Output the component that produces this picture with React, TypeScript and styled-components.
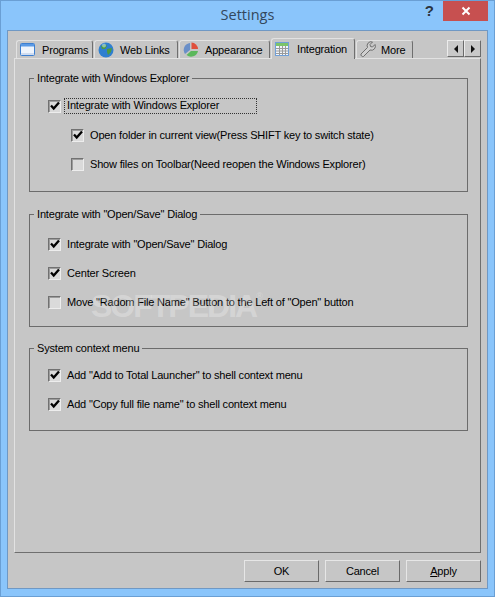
import React from 'react';
import styled, { createGlobalStyle } from 'styled-components';

const GlobalStyle = createGlobalStyle`
  html, body { margin: 0; padding: 0; background: #8ac5fb; }
  * { box-sizing: border-box; }
`;

const Window = styled.div`
  position: relative;
  width: 495px;
  height: 597px;
  background: #8ac5fb;
  border: 1px solid #6a9fd4;
  padding: 0 6px 7px;
  display: flex;
  flex-direction: column;
  font-family: 'Liberation Sans', Arial, sans-serif;
  font-size: 11px;
  letter-spacing: -0.18px;
  color: #000;
  overflow: hidden;
`;

const TitleBar = styled.div`
  position: relative;
  height: 29px;
  flex: none;
  display: flex;
  align-items: center;
  justify-content: center;
`;

const Title = styled.div`
  font-family: 'Open Sans', sans-serif;
  font-size: 14.5px;
  letter-spacing: 0;
  color: #33475c;
  margin-top: -2px;
`;

const HelpMark = styled.div`
  position: absolute;
  right: 54px;
  top: 1px;
  font-size: 15px;
  font-weight: 700;
  letter-spacing: 0;
  color: #2a3540;
`;

const CloseButton = styled.div`
  position: absolute;
  right: 0;
  top: 0;
  width: 45px;
  height: 20px;
  background: #c75050;
  display: flex;
  align-items: center;
  justify-content: center;
`;

const Client = styled.div`
  flex: 1;
  background: #c6c6c6;
  border: 1px solid #6f98c4;
  padding: 7px 6px 0;
  display: flex;
  flex-direction: column;
`;

const TabStrip = styled.div`
  height: 20px;
  flex: none;
  display: flex;
  align-items: flex-end;
  padding-left: 2px;
  position: relative;
  z-index: 1;
`;

const Tab = styled.div<{ $w: number; $active?: boolean }>`
  width: ${p => p.$w}px;
  height: ${p => (p.$active ? 21 : 18)}px;
  margin-right: 1px;
  margin-bottom: ${p => (p.$active ? -1 : 0)}px;
  background: #c6c6c6;
  border: 1px solid #e2e2e2;
  border-right-color: #6f6f6f;
  border-bottom: 0;
  border-radius: 3px 3px 0 0;
  display: flex;
  align-items: center;
  padding-left: 3px;
`;

const TabLabel = styled.span<{ $gap: number }>`
  margin-left: ${p => p.$gap}px;
  white-space: nowrap;
`;

const ScrollButtons = styled.div`
  margin-left: auto;
  margin-bottom: 1px;
  display: flex;
`;

const ScrollButton = styled.div`
  width: 17px;
  height: 17px;
  background: #c9c9c9;
  border: 1px solid;
  border-color: #ececec #6a6a6a #6a6a6a #ececec;
  display: flex;
  align-items: center;
  justify-content: center;
`;

const Panel = styled.div`
  height: 495px;
  flex: none;
  border: 1px solid;
  border-color: #e2e2e2 #6f6f6f #6f6f6f #e2e2e2;
  padding: 12px 12px 0 14px;
  display: flex;
  flex-direction: column;
`;

const Group = styled.fieldset<{ $h: number; $top?: number }>`
  height: ${p => p.$h}px;
  margin: ${p => p.$top ?? 0}px 0 0;
  border: 1px solid #6c6c6c;
  padding: 0 0 0 18px;
  min-width: 0;
  display: flex;
  flex-direction: column;
`;

const Legend = styled.legend`
  padding: 0 3px;
  line-height: 14px;
  height: 14px;
  margin-left: -14px;
  white-space: nowrap;
`;

const Row = styled.div<{ $indent?: boolean; $top: number }>`
  display: flex;
  align-items: center;
  height: 16px;
  margin-top: ${p => p.$top}px;
  margin-left: ${p => (p.$indent ? 23 : 0)}px;
`;

const Box = styled.span`
  width: 13px;
  height: 13px;
  flex: none;
  background: #dadada;
  border: 1px solid;
  border-color: #717171 #ededed #ededed #717171;
  box-shadow: inset 1px 1px 0 #9c9c9c;
  display: flex;
  align-items: center;
  justify-content: center;
  margin-right: 6px;
`;

const RowLabel = styled.span`
  white-space: nowrap;
`;

const FocusLabel = styled(RowLabel)`
  width: 193px;
  height: 16px;
  line-height: 15px;
  margin-left: -3px;
  padding-left: 3px;
  outline: 1px dotted #333;
  outline-offset: -1px;
`;

const Footer = styled.div`
  flex: 1;
  display: flex;
  justify-content: flex-end;
  gap: 6px;
  padding-top: 7px;
`;

const DialogButton = styled.div`
  width: 75px;
  height: 22px;
  background: #c6c6c6;
  border: 1px solid;
  border-color: #e6e6e6 #6a6a6a #6a6a6a #e6e6e6;
  display: flex;
  align-items: center;
  justify-content: center;
`;

const Watermark = styled.div`
  position: absolute;
  left: 90px;
  top: 287px;
  font-size: 32px;
  font-weight: 700;
  letter-spacing: -2px;
  color: rgba(255, 255, 255, 0.27);
  pointer-events: none;
`;

const WatermarkMark = styled.sup`
  font-size: 9px;
  font-weight: 400;
  letter-spacing: 0;
  vertical-align: 18px;
  line-height: 0;
`;

const Check = () => (
  <svg width="10" height="10" viewBox="0 0 10 10">
    <path d="M1 4.6 L3.7 7.6 L9 1.4" fill="none" stroke="#000" strokeWidth="2.3" />
  </svg>
);

const Option = ({ label, checked, top, indent, focus }: { label: string; checked?: boolean; top: number; indent?: boolean; focus?: boolean }) => (
  <Row $top={top} $indent={indent}>
    <Box>{checked && <Check />}</Box>
    {focus ? <FocusLabel>{label}</FocusLabel> : <RowLabel>{label}</RowLabel>}
  </Row>
);

const WindowIcon = () => (
  <svg width="15" height="13" viewBox="0 0 15 13">
    <rect x="0.5" y="0.5" width="14" height="12" rx="1" fill="#eef4fc" stroke="#3d7fd0" />
    <rect x="1" y="1" width="13" height="2.5" fill="#5a9ae6" />
    <rect x="1" y="10" width="13" height="2" fill="#cfdcf0" />
  </svg>
);

const GlobeIcon = () => (
  <svg width="16" height="16" viewBox="0 0 16 16">
    <circle cx="8" cy="8" r="7.5" fill="#2f7fd0" />
    <path d="M3 4 L7 2 L9 4 L7 7 L4 7 Z M9 7 L14 6 L13 10 L10 13 L9 10 Z" fill="#4f9a3f" />
    <circle cx="6" cy="3.5" r="2" fill="#bcdcf5" opacity="0.6" />
  </svg>
);

const PieIcon = () => (
  <svg width="16" height="16" viewBox="0 0 16 16">
    <path d="M7 1 L7 8 L2 12 A7 7 0 0 1 7 1 Z" fill="#6a8fc8" />
    <path d="M8.5 0.5 A7 7 0 0 1 15 7 L8.5 7 Z" fill="#e0503c" />
    <path d="M8 9 L15 9 A7 7 0 0 1 3.5 13 Z" fill="#5cb85c" />
  </svg>
);

const GridIcon = () => (
  <svg width="14" height="14" viewBox="0 0 14 14">
    <rect x="0.5" y="0.5" width="13" height="13" fill="#f2f6fb" stroke="#6f9fd8" />
    <rect x="1" y="1" width="12" height="3" fill="#7cc46a" />
    <path d="M1 6.5H13M1 9H13M1 11.5H13M4.5 4V13M7.5 4V13M10.5 4V13" stroke="#9a9a9a" strokeWidth="1" />
  </svg>
);

const WrenchIcon = () => (
  <svg width="16" height="17" viewBox="0 0 16 17">
    <path d="M15 3.5 L12.5 6 L10.5 5.5 L10 3.5 L12.5 1 A4 4 0 0 0 7.5 6.5 L1 13 A2 2 0 0 0 3.5 15.5 L10 9 A4 4 0 0 0 15 3.5 Z" fill="#d0d0d0" stroke="#6e6e6e" />
  </svg>
);

const App: React.FC = () => (
  <>
    <GlobalStyle />
    <Window>
      <TitleBar>
        <Title>Settings</Title>
        <HelpMark>?</HelpMark>
        <CloseButton>
          <svg width="10" height="10" viewBox="0 0 10 10">
            <path d="M1.5 1.5 L8.5 8.5 M8.5 1.5 L1.5 8.5" stroke="#fff" strokeWidth="2" />
          </svg>
        </CloseButton>
      </TitleBar>
      <Client>
        <TabStrip>
          <Tab $w={77}><WindowIcon /><TabLabel $gap={7}>Programs</TabLabel></Tab>
          <Tab $w={84}><GlobeIcon /><TabLabel $gap={6}>Web Links</TabLabel></Tab>
          <Tab $w={91}><PieIcon /><TabLabel $gap={6}>Appearance</TabLabel></Tab>
          <Tab $w={84} $active><GridIcon /><TabLabel $gap={8}>Integration</TabLabel></Tab>
          <Tab $w={57}><WrenchIcon /><TabLabel $gap={5}>More</TabLabel></Tab>
          <ScrollButtons>
            <ScrollButton>
              <svg width="6" height="8" viewBox="0 0 6 8"><path d="M5 0 V8 L1 4 Z" fill="#111" /></svg>
            </ScrollButton>
            <ScrollButton>
              <svg width="6" height="8" viewBox="0 0 6 8"><path d="M1 0 V8 L5 4 Z" fill="#111" /></svg>
            </ScrollButton>
          </ScrollButtons>
        </TabStrip>
        <Panel>
          <Group $h={121}>
            <Legend>Integrate with Windows Explorer</Legend>
            <Option top={13} checked focus label="Integrate with Windows Explorer" />
            <Option top={13} indent checked label="Open folder in current view(Press SHIFT key to switch state)" />
            <Option top={13} indent label="Show files on Toolbar(Need reopen the Windows Explorer)" />
          </Group>
          <Group $h={120} $top={15}>
            <Legend>Integrate with "Open/Save" Dialog</Legend>
            <Option top={15} checked label={'Integrate with "Open/Save" Dialog'} />
            <Option top={13} checked label="Center Screen" />
            <Option top={13} label={'Move "Radom File Name" Button to the Left of "Open" button'} />
          </Group>
          <Group $h={90} $top={14}>
            <Legend>System context menu</Legend>
            <Option top={12} checked label={'Add "Add to Total Launcher" to shell context menu'} />
            <Option top={13} checked label={'Add "Copy full file name" to shell context menu'} />
          </Group>
        </Panel>
        <Footer>
          <DialogButton>OK</DialogButton>
          <DialogButton>Cancel</DialogButton>
          <DialogButton><span><u>A</u>pply</span></DialogButton>
        </Footer>
      </Client>
      <Watermark>SOFTPEDIA<WatermarkMark>®</WatermarkMark></Watermark>
    </Window>
  </>
);

export default App;
